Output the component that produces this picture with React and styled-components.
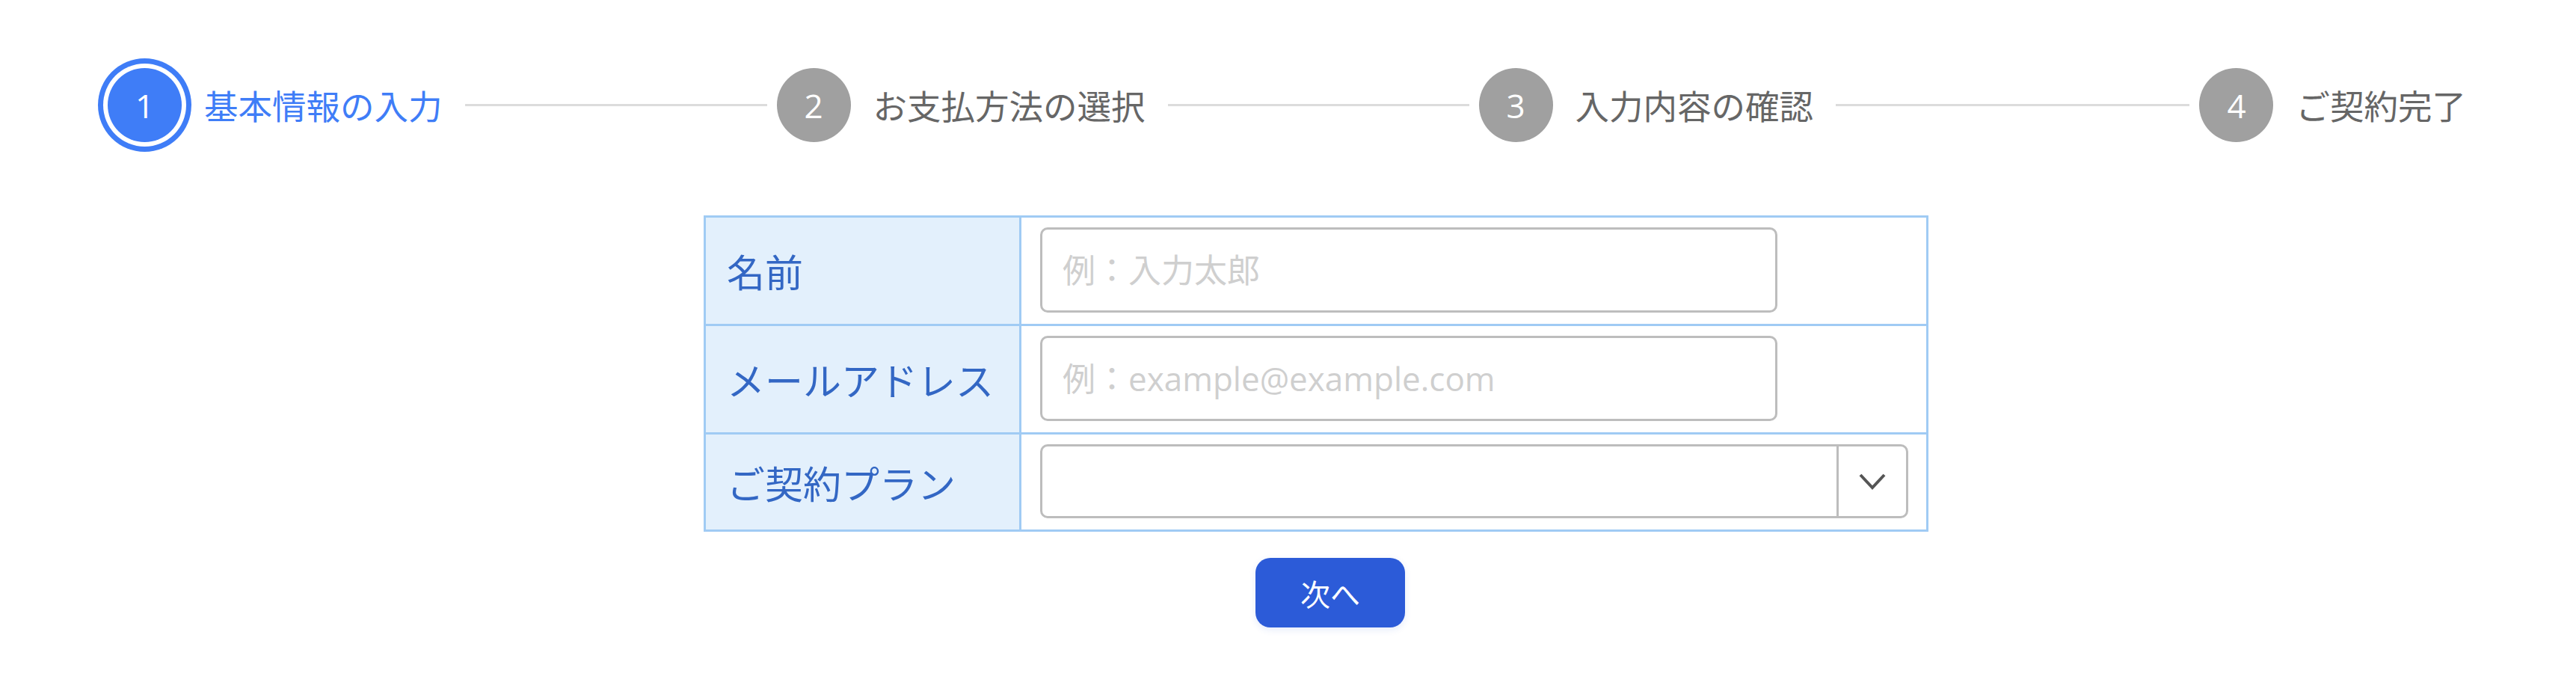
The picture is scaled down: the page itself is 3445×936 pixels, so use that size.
import React from "react";
import styled, { createGlobalStyle } from "styled-components";

const Global = createGlobalStyle`
  html, body {
    margin: 0;
    padding: 0;
    background: #ffffff;
    font-family: "Noto Sans", "Noto Sans CJK JP", sans-serif;
  }
  * { box-sizing: border-box; }
`;

const Page = styled.div`
  width: 3445px;
  min-height: 936px;
  background: #fff;
`;

const Stepper = styled.div`
  display: flex;
  align-items: center;
  padding: 91px 147px 0 144px;
`;

const Step = styled.div`
  display: flex;
  align-items: center;
  gap: 30px;
  flex: none;
`;

const Circle = styled.div`
  width: 99px;
  height: 99px;
  border-radius: 50%;
  display: flex;
  align-items: center;
  justify-content: center;
  color: #fff;
  font-size: 44px;
  font-family: "Open Sans", "Noto Sans", sans-serif;
  background: ${(p) => (p.$active ? "#3f7df7" : "#a0a0a0")};
  box-shadow: ${(p) =>
    p.$active ? "0 0 0 6px #ffffff, 0 0 0 13px #3f7df7" : "none"};
`;

const StepLabel = styled.span`
  font-family: "Noto Sans CJK JP", sans-serif;
  font-size: 45.5px;
  line-height: 1;
  color: ${(p) => (p.$active ? "#3f7df7" : "#666666")};
  white-space: nowrap;
`;

const Line = styled.div`
  flex: ${(p) => p.$grow} 1 0;
  height: 3px;
  background: #dcdcdc;
  margin: 0 13px 0 30px;
`;

const FormSection = styled.div`
  display: flex;
  flex-direction: column;
  align-items: center;
  padding-left: 75px;
  margin-top: 98px;
`;

const Table = styled.div`
  width: 1638px;
  border: 3px solid #a0cbf4;
  display: flex;
  flex-direction: column;
`;

const Row = styled.div`
  display: grid;
  grid-template-columns: 422px 1fr;
  border-top: ${(p) => (p.$first ? "none" : "3px solid #a0cbf4")};
`;

const LabelCell = styled.div`
  background: #e3f0fc;
  border-right: 3px solid #a0cbf4;
  display: flex;
  align-items: center;
  padding-left: 28px;
  font-family: "Noto Sans CJK JP", sans-serif;
  font-size: 51px;
  color: #3367c4;
  white-space: nowrap;
`;

const ValueCell = styled.div`
  padding: 13px 24px 15px 25px;
  display: flex;
  align-items: center;
`;

const TextInput = styled.input`
  width: 986px;
  height: 114px;
  border: 3px solid #bdbdbd;
  border-radius: 10px;
  padding: 0 27px;
  font-family: "Open Sans", "Noto Sans CJK JP", sans-serif;
  font-size: 44px;
  color: #333;
  outline: none;
  background: #fff;
  &::placeholder {
    color: #cfcfcf;
  }
`;

const SelectBox = styled.div`
  width: 100%;
  height: 99px;
  border: 3px solid #bdbdbd;
  border-radius: 10px;
  display: flex;
  background: #fff;
`;

const SelectValue = styled.div`
  flex: 1;
`;

const SelectArrow = styled.div`
  width: 93px;
  border-left: 3px solid #bdbdbd;
  display: flex;
  align-items: center;
  justify-content: center;
  color: #555;
`;

const NextButton = styled.button`
  margin-top: 35px;
  margin-left: 38px;
  width: 200px;
  height: 93px;
  border: none;
  border-radius: 20px;
  background: #2c5bd8;
  color: #fff;
  font-family: "Noto Sans CJK JP", sans-serif;
  font-size: 40px;
  box-shadow: 0 3px 10px rgba(44, 91, 216, 0.12);
  cursor: pointer;
`;

const steps = [
  { n: 1, label: "基本情報の入力", grow: 407 },
  { n: 2, label: "お支払方法の選択", grow: 406 },
  { n: 3, label: "入力内容の確認", grow: 477 },
  { n: 4, label: "ご契約完了" },
];

export default function App() {
  return (
    <Page>
      <Global />
      <Stepper>
        {steps.map((s, i) => (
          <React.Fragment key={s.n}>
            <Step>
              <Circle $active={i === 0}>{s.n}</Circle>
              <StepLabel $active={i === 0}>{s.label}</StepLabel>
            </Step>
            {s.grow && <Line $grow={s.grow} />}
          </React.Fragment>
        ))}
      </Stepper>
      <FormSection>
        <Table>
          <Row $first>
            <LabelCell>名前</LabelCell>
            <ValueCell>
              <TextInput placeholder="例：入力太郎" />
            </ValueCell>
          </Row>
          <Row>
            <LabelCell>メールアドレス</LabelCell>
            <ValueCell>
              <TextInput placeholder="例：example@example.com" />
            </ValueCell>
          </Row>
          <Row>
            <LabelCell>ご契約プラン</LabelCell>
            <ValueCell>
              <SelectBox>
                <SelectValue />
                <SelectArrow>
                  <svg width="36" height="22" viewBox="0 0 36 22" fill="none">
                    <polyline
                      points="2,2 18,19 34,2"
                      stroke="#555"
                      strokeWidth="4"
                      strokeLinejoin="miter"
                    />
                  </svg>
                </SelectArrow>
              </SelectBox>
            </ValueCell>
          </Row>
        </Table>
        <NextButton>次へ</NextButton>
      </FormSection>
    </Page>
  );
}
